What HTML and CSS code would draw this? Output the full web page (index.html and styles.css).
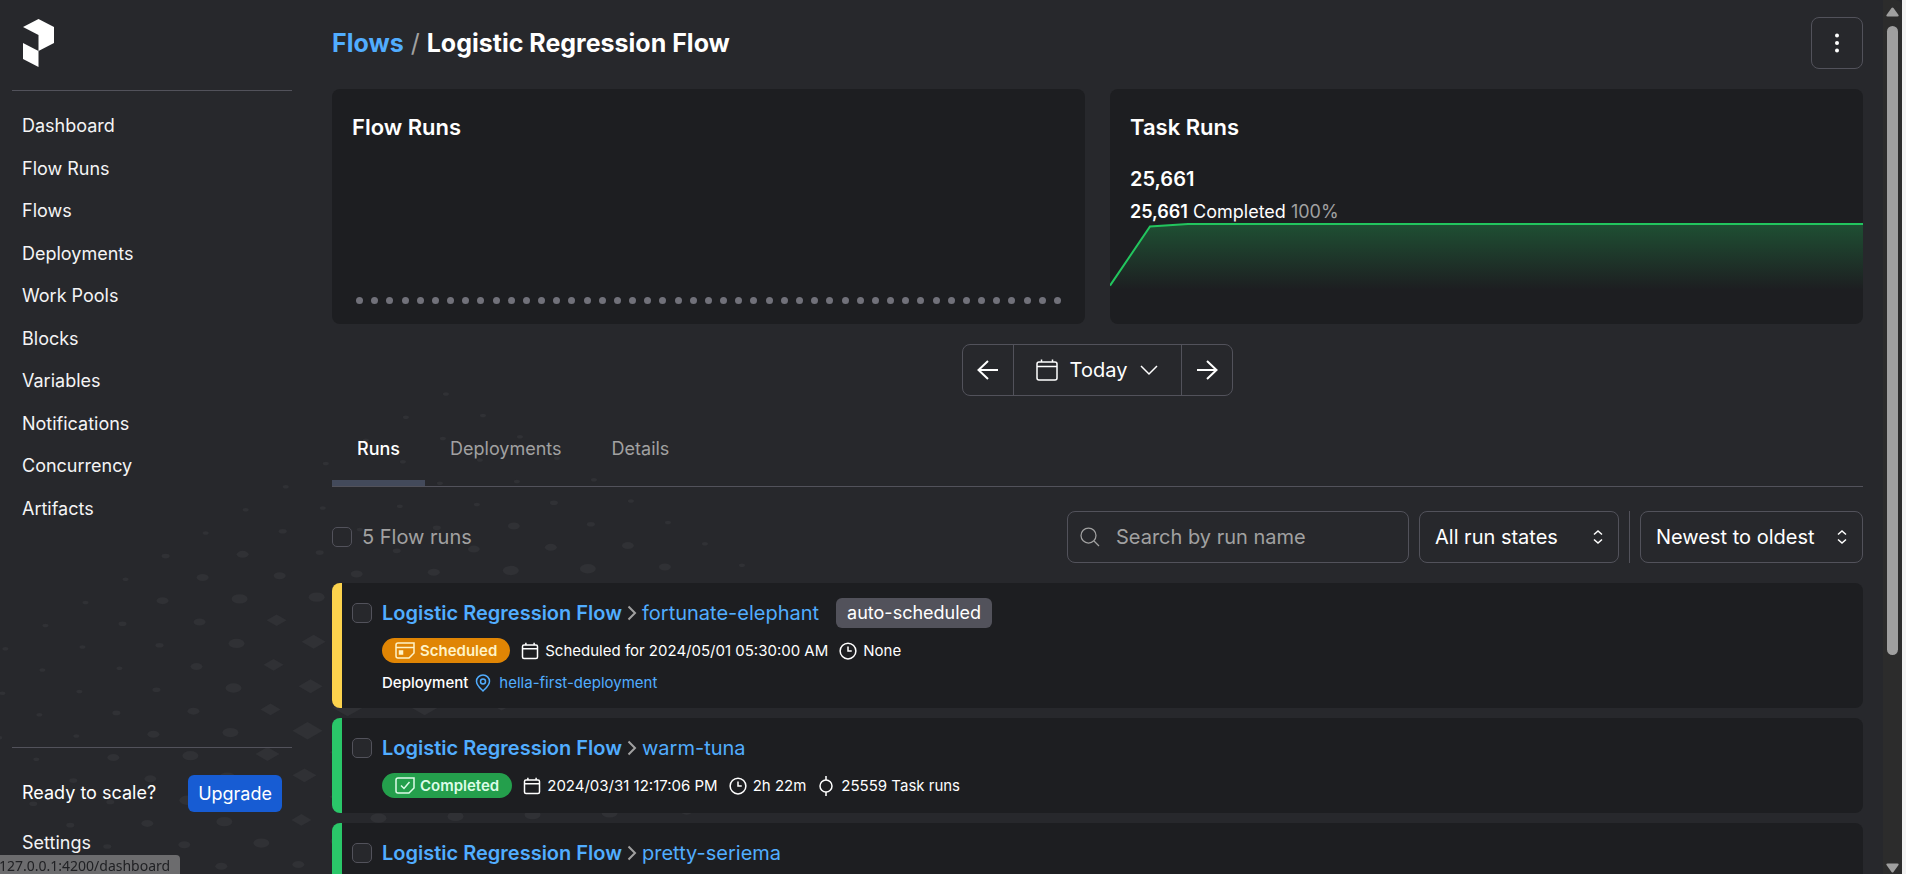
FILE: index.html
```html
<!DOCTYPE html>
<html lang="en">
<head>
<meta charset="utf-8">
<title>Logistic Regression Flow</title>
<link rel="stylesheet" href="styles.css">
</head>
<body>
<svg class="icon-defs" aria-hidden="true">
  <defs>
    <symbol id="calendar" viewBox="0 0 24 24"><rect x="2" y="4" width="20" height="18" rx="2"/><path d="M2 9h20M6.500 1v3M17.500 1v3"/></symbol>
    <symbol id="clock" viewBox="0 0 24 24"><circle cx="12" cy="12" r="10.500"/><path d="M12 6v6h5"/></symbol>
    <symbol id="chevron-right" viewBox="0 0 10 16"><path d="M1.500 1.500L8 8l-6.500 6.500"/></symbol>
    <symbol id="updown" viewBox="0 0 10 14"><path d="M1 4.500L5 1l4 3.500M1 9.500L5 13l4-3.500"/></symbol>
  </defs>
</svg>
<svg class="backdrop" id="backdrop" width="960" height="874" aria-hidden="true"></svg>
<div class="app">
  <aside class="sidebar">
    <a class="logo" href="#" aria-label="Prefect">
      <svg width="32" height="48" viewBox="0 0 32 48" fill="#fff"><path d="M0 8L15.500 0 31 8v16l-15.500 8V16zM0 24l15.500 8v16L0 40z"/></svg>
    </a>
    <nav class="nav">
      <a href="#">Dashboard</a>
      <a href="#">Flow Runs</a>
      <a href="#">Flows</a>
      <a href="#">Deployments</a>
      <a href="#">Work Pools</a>
      <a href="#">Blocks</a>
      <a href="#">Variables</a>
      <a href="#">Notifications</a>
      <a href="#">Concurrency</a>
      <a href="#">Artifacts</a>
    </nav>
    <div class="nav nav-foot">
      <div class="upsell"><span>Ready to scale?</span><button class="upgrade" type="button">Upgrade</button></div>
      <a href="#">Settings</a>
    </div>
  </aside>

  <main class="main">
    <header class="head">
      <h1 class="crumbs"><a href="#">Flows</a><span class="slash">/</span><span>Logistic Regression Flow</span></h1>
      <button class="more" type="button" aria-label="More actions">
        <svg width="20" height="20" viewBox="0 0 20 20" fill="#fff"><circle cx="10" cy="2.500" r="2"/><circle cx="10" cy="10" r="2"/><circle cx="10" cy="17.500" r="2"/></svg>
      </button>
    </header>

    <section class="stats">
      <article class="card flow-card">
        <h2>Flow Runs</h2>
        <div class="dots" id="dots"></div>
      </article>
      <article class="card task-card">
        <h2>Task Runs</h2>
        <p class="total">25,661</p>
        <p class="breakdown"><b>25,661</b> Completed <span>100%</span></p>
        <svg class="area" viewBox="0 0 753 100" preserveAspectRatio="none" aria-hidden="true">
          <defs><linearGradient id="fade" gradientUnits="userSpaceOnUse" x1="0" y1="0" x2="0" y2="66"><stop offset="0" stop-color="#22c55e" stop-opacity=".3"/><stop offset="1" stop-color="#22c55e" stop-opacity="0"/></linearGradient></defs>
          <path d="M0 62L40 3.500 78 1H753V100H0z" fill="url(#fade)"/>
          <path d="M0 62L40 3.500 78 1H753" fill="none" stroke="#22c55e" stroke-width="2" vector-effect="non-scaling-stroke"/>
        </svg>
      </article>
    </section>

    <div class="range">
      <button type="button" aria-label="Previous"><svg class="ico" width="22" height="20" viewBox="0 0 22 20"><path d="M21 10H1.500M11 1L1.500 10 11 19"/></svg></button>
      <button type="button" class="today"><svg class="ico" width="24" height="24" viewBox="0 0 24 24"><rect x="2" y="4" width="20" height="18" rx="2"/><path d="M2 8.500h20M6.500 1.500v2.500M17.500 1.500v2.500"/></svg><span>Today</span><svg class="ico" width="18" height="10" viewBox="0 0 18 10"><path d="M1 1l8 8 8-8"/></svg></button>
      <button type="button" aria-label="Next"><svg class="ico" width="22" height="20" viewBox="0 0 22 20"><path d="M1 10h19.500M11 1l9.500 9-9.500 9"/></svg></button>
    </div>

    <div class="tabs" role="tablist">
      <button type="button" role="tab" aria-selected="true" class="tab active">Runs</button>
      <button type="button" role="tab" aria-selected="false" class="tab">Deployments</button>
      <button type="button" role="tab" aria-selected="false" class="tab">Details</button>
    </div>

    <div class="filters">
      <label class="count"><input type="checkbox" class="check">5 Flow runs</label>
      <div class="search">
        <svg class="ico" width="20" height="20" viewBox="0 0 20 20"><circle cx="8.500" cy="8.500" r="7.500"/><path d="M14 14l5 5"/></svg>
        <input type="search" placeholder="Search by run name" aria-label="Search by run name">
      </div>
      <div class="select states"><select aria-label="Run state"><option>All run states</option></select><svg class="ico" width="10" height="14"><use href="#updown"/></svg></div>
      <div class="rule"></div>
      <div class="select sort"><select aria-label="Sort order"><option>Newest to oldest</option></select><svg class="ico" width="10" height="14"><use href="#updown"/></svg></div>
    </div>

    <ul class="runs">
      <li class="run scheduled">
        <input type="checkbox" class="check" aria-label="Select fortunate-elephant">
        <div class="body">
          <div class="title"><a class="flow" href="#">Logistic Regression Flow</a><svg class="ico chev" width="10" height="16"><use href="#chevron-right"/></svg><a href="#">fortunate-elephant</a><span class="tag">auto-scheduled</span></div>
          <div class="meta">
            <span class="badge"><svg class="ico" width="20" height="18" viewBox="0 0 20 18"><path d="M1 3a2 2 0 0 1 2-2h16v10l-5 5H3a2 2 0 0 1-2-2zM1 5.500h18"/><rect x="4.500" y="9" width="3" height="3" fill="currentColor"/></svg>Scheduled</span>
            <span class="fact"><svg class="ico" width="18" height="18"><use href="#calendar"/></svg>Scheduled for 2024/05/01 05:30:00 AM</span>
            <span class="fact"><svg class="ico" width="18" height="18"><use href="#clock"/></svg>None</span>
          </div>
          <div class="deploy"><span>Deployment</span><a href="#"><svg class="ico" width="16" height="18" viewBox="0 0 16 18"><path d="M8 17C5 14 1.500 11.500 1.500 7.300a6.500 6.300 0 0 1 13 0C14.500 11.500 11 14 8 17z"/><circle cx="8" cy="7.500" r="2.500"/></svg>hella-first-deployment</a></div>
        </div>
      </li>
      <li class="run completed">
        <input type="checkbox" class="check" aria-label="Select warm-tuna">
        <div class="body">
          <div class="title"><a class="flow" href="#">Logistic Regression Flow</a><svg class="ico chev" width="10" height="16"><use href="#chevron-right"/></svg><a href="#">warm-tuna</a></div>
          <div class="meta">
            <span class="badge"><svg class="ico" width="20" height="18" viewBox="0 0 20 18"><path d="M1 3a2 2 0 0 1 2-2h16v10l-5 5H3a2 2 0 0 1-2-2zM6 8.500l3 3 5.500-6.500"/></svg>Completed</span>
            <span class="fact"><svg class="ico" width="18" height="18"><use href="#calendar"/></svg>2024/03/31 12:17:06 PM</span>
            <span class="fact"><svg class="ico" width="18" height="18"><use href="#clock"/></svg>2h 22m</span>
            <span class="fact"><svg class="ico task" width="18" height="20" viewBox="0 0 18 20"><circle cx="9" cy="10" r="6"/><path d="M9 0v4M9 16v4"/></svg>25559 Task runs</span>
          </div>
        </div>
      </li>
      <li class="run completed">
        <input type="checkbox" class="check" aria-label="Select pretty-seriema">
        <div class="body">
          <div class="title"><a class="flow" href="#">Logistic Regression Flow</a><svg class="ico chev" width="10" height="16"><use href="#chevron-right"/></svg><a href="#">pretty-seriema</a></div>
        </div>
      </li>
    </ul>
  </main>

  <div class="scrollbar" aria-hidden="true">
    <svg width="13" height="10" viewBox="0 0 13 10" fill="#9f9f9f"><path d="M5.500 1q1-1.200 2 0l5 7q.6 1.500-1 1.500h-10q-1.600 0-1-1.500z"/></svg>
    <div class="track"><div class="thumb"></div></div>
    <svg width="13" height="10" viewBox="0 0 13 10" fill="#9f9f9f"><path d="M5.500 9q1 1.200 2 0l5-7q.6-1.500-1-1.500h-10q-1.600 0-1 1.500z"/></svg>
  </div>
</div>
<div class="status">127.0.0.1:4200/dashboard</div>
<script src="script.js"></script>
</body>
</html>
```

FILE: styles.css
```css
* { box-sizing: border-box; }
html, body { height: 100%; }
body {
  margin: 0;
  overflow: hidden;
  background: #27282c;
  color: #fff;
  font: 20px/30px Inter, "Liberation Sans", sans-serif;
}
h1, h2, p, ul { margin: 0; padding: 0; }
a { color: #51adff; text-decoration: none; }
button, input, select { font: inherit; color: inherit; }
button { background: none; border: 0; padding: 0; margin: 0; }
svg { display: block; flex: none; }

.icon-defs { position: absolute; width: 0; height: 0; }
.backdrop { position: absolute; left: 0; bottom: 0; fill: #303135; }
.ico { fill: none; stroke: currentColor; stroke-width: 2; overflow: visible; }

.app { position: relative; display: flex; height: 100vh; border-right: 4px solid #f3f3f3; }

/* Sidebar */
.sidebar { display: flex; flex-direction: column; width: 304px; flex: none; padding: 19px 12px 10px; }
.logo { padding: 0 11px 23px; border-bottom: 1px solid #52525b; }
.nav { padding-top: 14px; font-size: 18px; line-height: 1.25; }
.nav a { display: block; padding: 10px; color: #f4f4f5; }
.nav-foot { margin-top: auto; padding-top: 27px; border-top: 1px solid #52525b; }
.upsell { display: flex; align-items: center; justify-content: space-between; padding: 0 10px; margin-bottom: 10px; }
.upgrade { padding: 7px 10px; border-radius: 6px; background: #175cd3; line-height: 23px; }

/* Page */
.main { flex: 1; min-width: 0; overflow: hidden; padding: 17px 20px 0 28px; }
.head { display: flex; align-items: center; justify-content: space-between; margin-bottom: 20px; }
.crumbs { display: flex; gap: 7px; font-size: 25px; font-weight: 700; }
.slash { color: #a1a1a1; font-weight: 400; }
.more { display: grid; place-items: center; width: 52px; height: 52px; border: 1px solid #52525b; border-radius: 8px; }

.stats { display: grid; grid-template-columns: 1fr 1fr; gap: 25px; margin-bottom: 20px; }
.card { display: flex; flex-direction: column; padding: 23px 20px 0; border-radius: 8px; background: #1d1e21; overflow: hidden; }
.card h2 { font-size: 22px; font-weight: 600; }
.dots { display: flex; justify-content: space-between; margin: auto 4px 20px; }
.dot { width: 7px; height: 7px; border-radius: 50%; background: #71717a; }
.total { margin-top: 22px; font-weight: 600; }
.breakdown { margin-top: 4px; font-size: 18px; line-height: 28px; }
.breakdown b { font-weight: 600; }
.breakdown span { color: #a1a1a1; }
.area { width: calc(100% + 40px); height: 101px; margin: -3px -20px 0; }

.range { display: flex; width: max-content; margin: 0 auto 20px; border: 1px solid #52525b; border-radius: 8px; }
.range button { display: flex; align-items: center; justify-content: center; width: 50px; height: 50px; }
.range .today { width: auto; gap: 10px; padding: 0 23px 0 21px; border: solid #52525b; border-width: 0 1px; }
.today span { margin: 0 3px 0 1px; }
.today .ico { stroke-width: 1.5; }

.tabs { display: flex; border-bottom: 1px solid #52525b; }
.tab { padding: 18px 25px 16px; border-bottom: 6px solid transparent; color: #a1a1a1; font-size: 18px; }
.tab.active { border-color: #434a5b; color: #fff; font-weight: 500; }

.filters { display: flex; gap: 10px; margin: 24px 0 20px; }
.count { display: flex; align-items: center; gap: 10px; margin-right: auto; color: #a1a1a1; }
.check { appearance: none; flex: none; width: 20px; height: 20px; margin: 0; border: 1px solid #52525b; border-radius: 5px; background: #27282c; }
.search { display: flex; align-items: center; gap: 16px; width: 342px; padding: 0 12px; border: 1px solid #52525b; border-radius: 8px; color: #a1a1a1; }
.search .ico { stroke-width: 1.25; }
.search input { appearance: none; flex: 1; min-width: 0; height: 50px; padding: 0; border: 0; background: none; outline: 0; }
.search input::placeholder { color: #a1a1a1; opacity: 1; }
.select { display: grid; align-items: center; border: 1px solid #52525b; border-radius: 8px; }
.select > * { grid-area: 1 / 1; }
.select select { appearance: none; width: 100%; height: 50px; padding: 0 15px; border: 0; background: none; }
.select .ico { justify-self: end; margin-right: 15px; stroke-width: 1.5; pointer-events: none; }
.states { width: 200px; }
.sort { width: 223px; }
.rule { width: 1px; background: #52525b; }

.runs { display: grid; gap: 10px; list-style: none; }
.run { display: flex; gap: 10px; padding: 15px 10px; border-left: 10px solid #2ac769; border-radius: 8px; background: #1d1e21; }
.run.scheduled { border-color: #fcd34d; }
.run .check { margin-top: 5px; }
.body { display: grid; gap: 10px; }
.title, .meta, .deploy, .badge, .fact, .deploy a { display: flex; align-items: center; }
.title { height: 30px; }
.flow { font-weight: 600; }
.chev { margin: 0 5px; color: #a1a1a1; }
.tag { margin-left: 17px; padding: 0 11px; border-radius: 6px; background: #52525b; font-size: 18px; }
.meta, .deploy { font-size: 15px; line-height: 20px; }
.meta { gap: 11px; }
.badge { gap: 5px; height: 25px; padding: 0 13px; border-radius: 13px; background: #249f4c; color: #dcfce7; font-weight: 600; }
.scheduled .badge { background: #e08504; color: #fef3c7; }
.badge .ico, .deploy .ico, .task { stroke-width: 1.5; }
.fact { gap: 6px; }
.deploy { gap: 7px; font-weight: 500; }
.deploy a { gap: 8px; font-weight: 400; }

/* Scrollbar and link preview */
.scrollbar { display: flex; flex-direction: column; align-items: center; gap: 9px; width: 19px; padding: 7px 0 1px; background: #2c2c2c; border-top-right-radius: 6px; }
.track { flex: 1; }
.thumb { width: 11px; height: 76%; border-radius: 6px; background: #9f9f9f; }
.status { position: fixed; left: 0; bottom: 0; padding-right: 10px; height: 19px; border-top-right-radius: 4px; background: #6c6c6e; color: #202124; font: 14px/22px "Noto Sans", sans-serif; text-indent: -1px; white-space: nowrap; }
```

FILE: script.js
```js
const NS = "http://www.w3.org/2000/svg";
const backdrop = document.getElementById("backdrop");

// Each row: index of its first mark, then the half-width of every mark along it.
const rows = [
  [0, [3, 3, 3, 3, 4, 3, 3, 3, 3, 3, 3, 3]],
  [-1, [3, 3, 3, 4, 6, 6, 6, 4, 3, 3, 3, 3, 3]],
  [-2, [3, 3, 3, 3, 4, 6, 8, 6, 4, 3, 3, 3, 3, 3]],
  [-2, [3, 3, 4, 4, 6, 8, 10, 8, 6, 4, 4, 3, 3, 3]],
  [-3, [4, 4, 6, 6, 6, 8, 10, 12, 10, 8, 6, 6, 6, 4, 3]],
  [-3, [4, 4, 6, 8, 8, 10, 12, 12, 12, 10, 8, 8, 6, 4, 3]],
  [-3, [4, 6, 8, 8, 12, 15, 15, 15, 12, 10, 8, 8, 8, 6, 3]],
  [-2, [6, 8, 10, 12, 15, 15, 16, 12, 10, 8, 8, 8, 6, 3]],
  [-2, [6, 8, 10, 12, 15, 15, 15, 11, 8, 8, 6, 6, 4, 3]],
  [-1, [6, 8, 8, 12, 12]],
  [0, [6, 6, 8]],
  [1, [6, 6, 8]],
  [2, [6, 6, 8]],
  [4, [6, 6]],
  [5, [6, 5]]
];

rows.forEach(([first, sizes], j) => {
  sizes.forEach((r, k) => {
    const i = first + k;
    const x = 5.4 + 40.05 * i + 37 * j;
    const y = 648.7 - 23.15 * i + 21.4 * j;
    const h = r * 0.58;
    let mark;
    if (r < 10) {
      mark = document.createElementNS(NS, "ellipse");
      mark.setAttribute("cx", x);
      mark.setAttribute("cy", y);
      mark.setAttribute("rx", r);
      mark.setAttribute("ry", h);
    } else {
      mark = document.createElementNS(NS, "path");
      mark.setAttribute("d", `M${x - r} ${y}L${x} ${y - h}L${x + r} ${y}L${x} ${y + h}z`);
    }
    backdrop.append(mark);
  });
});

const dots = document.getElementById("dots");
for (let n = 0; n < 47; n++) {
  const dot = document.createElement("span");
  dot.className = "dot";
  dots.append(dot);
}
```
